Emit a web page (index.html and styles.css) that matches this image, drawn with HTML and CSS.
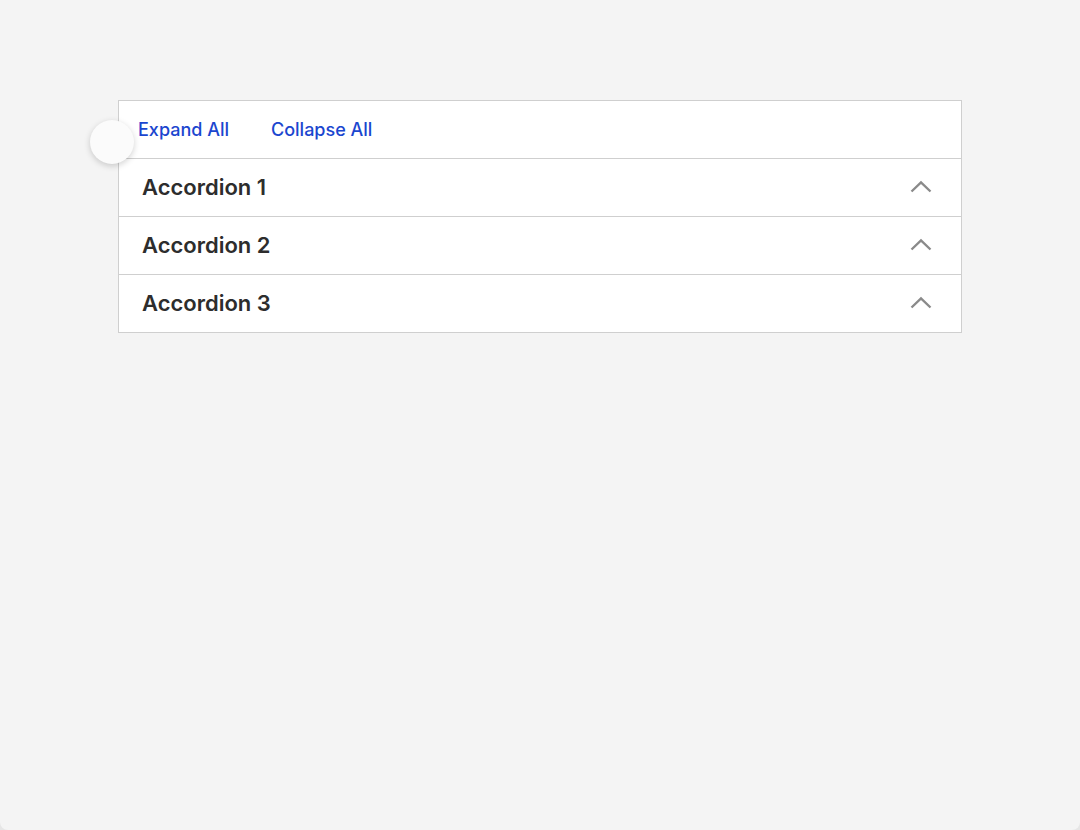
FILE: index.html
```html
<!DOCTYPE html>
<html>
<head>
<meta charset="utf-8">
<link rel="stylesheet" href="styles.css">
</head>
<body>
<div class="page">
  <div class="accordion">
    <div class="toolbar">
      <span class="circle"></span>
      <a class="link">Expand All</a>
      <a class="link">Collapse All</a>
    </div>
    <div class="item">
      <span class="title">Accordion 1</span>
      <svg class="chev" width="22" height="13" viewBox="0 0 22 13"><path d="M1.5 11.5 L11 2.5 L20.5 11.5" fill="none" stroke="#8a8a8a" stroke-width="2.4"/></svg>
    </div>
    <div class="item">
      <span class="title">Accordion 2</span>
      <svg class="chev" width="22" height="13" viewBox="0 0 22 13"><path d="M1.5 11.5 L11 2.5 L20.5 11.5" fill="none" stroke="#8a8a8a" stroke-width="2.4"/></svg>
    </div>
    <div class="item">
      <span class="title">Accordion 3</span>
      <svg class="chev" width="22" height="13" viewBox="0 0 22 13"><path d="M1.5 11.5 L11 2.5 L20.5 11.5" fill="none" stroke="#8a8a8a" stroke-width="2.4"/></svg>
    </div>
  </div>
</div>
</body>
</html>
```
FILE: styles.css
```css
html, body {
  margin: 0;
  padding: 0;
}
html {
  background: #e6e6e6;
}
body {
  background: #f4f4f4;
  height: 830px;
  border-radius: 0 0 8px 8px;
  font-family: Inter, "Noto Sans", sans-serif;
  overflow: hidden;
}
.page {
  padding: 100px 0 0 118px;
}
.accordion {
  width: 842px;
  border: 1px solid #cfcfcf;
  background: #fff;
}
.toolbar {
  position: relative;
  height: 57px;
  display: flex;
  align-items: center;
  gap: 42px;
  padding: 0 0 0 19px;
  border-bottom: 1px solid #cfcfcf;
}
.link {
  color: #1b46cf;
  font-size: 18px;
  font-weight: 500;
  line-height: 20px;
  margin-top: 1px;
}
.circle {
  position: absolute;
  left: -29px;
  top: 19px;
  width: 44px;
  height: 44px;
  border-radius: 50%;
  background: #fbfbfb;
  box-shadow: 0 2px 6px rgba(0,0,0,0.18);
}
.item {
  height: 57px;
  display: flex;
  align-items: center;
  justify-content: space-between;
  padding: 0 29px 0 23px;
  border-bottom: 1px solid #cfcfcf;
}
.item:last-child {
  border-bottom: none;
}
.title {
  font-size: 22px;
  font-weight: 600;
  color: #2d2d2d;
  margin-top: -2px;
}
.chev {
  display: block;
  margin-top: -3px;
}
```
